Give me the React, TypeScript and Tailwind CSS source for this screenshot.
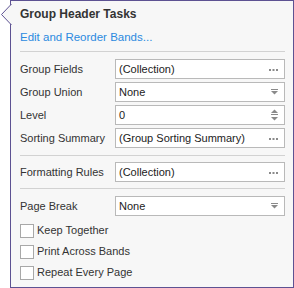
const FONT = { fontFamily: '"Liberation Sans", Arial, sans-serif' };

function Dots() {
    return (
        <svg width="9" height="3" viewBox="0 0 9 3" className="shrink-0">
            <rect x="0" y="1" width="2" height="2" fill="#8a8a8a" />
            <rect x="3.5" y="1" width="2" height="2" fill="#8a8a8a" />
            <rect x="7" y="1" width="2" height="2" fill="#8a8a8a" />
        </svg>
    );
}

function Arrow() {
    return (
        <svg width="7" height="6" viewBox="0 0 7 6" className="shrink-0">
            <rect x="0" y="0" width="7" height="1" fill="#8a8a8a" />
            <path d="M0 2 L7 2 L3.5 5.5 Z" fill="#8a8a8a" />
        </svg>
    );
}

function Spin() {
    return (
        <svg width="7" height="14" viewBox="0 0 7 14" className="shrink-0">
            <path d="M0 5 L7 5 L3.5 1.5 Z" fill="#8a8a8a" />
            <rect x="0" y="6" width="7" height="1" fill="#8a8a8a" />
            <path d="M0 9 L7 9 L3.5 12.5 Z" fill="#8a8a8a" />
        </svg>
    );
}

function Field({ label, value, kind }: { label: string; value: string; kind: 'dots' | 'arrow' | 'spin' }) {
    return (
        <div className="flex items-center h-[22px]">
            <span className="w-[95px] text-[11px] text-[#333333] whitespace-nowrap">{label}</span>
            <div className="flex-1 h-[20px] bg-white border border-[#b9b9b9] flex items-center pl-[3px] pr-[6px]">
                <span className="flex-1 text-[11px] text-[#222222] whitespace-nowrap">{value}</span>
                {kind === 'dots' && <Dots />}
                {kind === 'arrow' && <Arrow />}
                {kind === 'spin' && <Spin />}
            </div>
        </div>
    );
}

function Check({ label }: { label: string }) {
    return (
        <div className="flex items-center h-[21px] gap-[3px]">
            <div className="w-[14px] h-[14px] bg-white border border-[#a8a8a8]" />
            <span className="text-[11px] text-[#333333] whitespace-nowrap">{label}</span>
        </div>
    );
}

export default function App() {
    return (
        <div className="w-[294px] h-[288px] bg-white relative" style={FONT}>
            <div className="absolute left-[10px] top-0 w-[284px] h-[288px] bg-[#f7f7f7] border border-[#5d5292] flex flex-col pl-[9px] pr-[8px]">
                <div className="h-[23px] flex items-center mt-[1px]">
                    <span className="text-[12px] font-bold text-[#333333] whitespace-nowrap">Group Header Tasks</span>
                </div>
                <div className="h-[26px] flex items-center">
                    <span className="text-[11.5px] text-[#2b8ae0] whitespace-nowrap">Edit and Reorder Bands...</span>
                </div>
                <div className="h-px bg-[#d2d2d2]" />
                <div className="flex flex-col mt-[6px] gap-[1px]">
                    <Field label="Group Fields" value="(Collection)" kind="dots" />
                    <Field label="Group Union" value="None" kind="arrow" />
                    <Field label="Level" value="0" kind="spin" />
                    <Field label="Sorting Summary" value="(Group Sorting Summary)" kind="dots" />
                </div>
                <div className="h-px bg-[#d2d2d2] mt-[6px]" />
                <div className="mt-[5px]">
                    <Field label="Formatting Rules" value="(Collection)" kind="dots" />
                </div>
                <div className="h-px bg-[#d2d2d2] mt-[5px]" />
                <div className="mt-[6px]">
                    <Field label="Page Break" value="None" kind="arrow" />
                </div>
                <div className="flex flex-col mt-[3px]">
                    <Check label="Keep Together" />
                    <Check label="Print Across Bands" />
                    <Check label="Repeat Every Page" />
                </div>
            </div>
            <svg width="12" height="22" viewBox="0 0 12 22" className="absolute left-0 top-[4px]">
                <path d="M11.5 0 L1.5 10.5 L11.5 21" fill="#f7f7f7" stroke="#5d5292" strokeWidth="1" />
            </svg>
        </div>
    );
}
